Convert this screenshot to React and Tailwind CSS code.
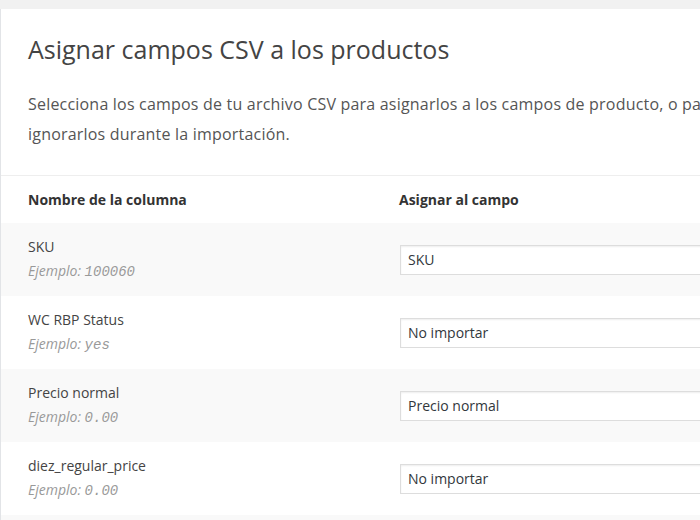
const rows = [
  { name: "SKU", example: "100060", field: "SKU" },
  { name: "WC RBP Status", example: "yes", field: "No importar" },
  { name: "Precio normal", example: "0.00", field: "Precio normal" },
  { name: "diez_regular_price", example: "0.00", field: "No importar" },
];

function App() {
  return (
    <div
      className="h-[520px] overflow-hidden bg-[#f1f1f1] pt-[9px]"
      style={{ fontFamily: '"Open Sans", "Noto Sans", sans-serif' }}
    >
      <div className="w-[960px] min-h-full bg-white border-l border-[#e2e4e7]">
        <div className="px-[27px] pt-[23px] pb-[26px]">
          <h2 className="text-[25px] leading-[34px] text-[#444]">
            Asignar campos CSV a los productos
          </h2>
          <p className="mt-[23px] text-[16px] leading-[30px] text-[#555] w-[690px] tracking-[0.2px]">
            Selecciona los campos de tu archivo CSV para asignarlos a los campos de producto, o para
            ignorarlos durante la importación.
          </p>
        </div>

        <div className="border-t border-[#eeeeee]">
          <div className="grid grid-cols-[398px_1fr] h-[47px] items-center text-[14px] font-bold text-[#333]">
            <div className="pl-[27px]">Nombre de la columna</div>
            <div>Asignar al campo</div>
          </div>

          {rows.map((row, i) => (
            <div
              key={row.name + i}
              className={
                "grid grid-cols-[398px_1fr] h-[73px] items-center " +
                (i % 2 === 0 ? "bg-[#f9f9f9]" : "bg-white")
              }
            >
              <div className="pl-[27px] text-[14px] leading-[24px]">
                <div className="text-[#444]">{row.name}</div>
                <div className="italic text-[#999]">
                  Ejemplo:{" "}
                  <span
                    className="text-[14px]"
                    style={{ fontFamily: '"Liberation Mono", "DejaVu Sans Mono", monospace' }}
                  >
                    {row.example}
                  </span>
                </div>
              </div>
              <div className="pl-[1px]">
                <div className="w-[420px] h-[30px] flex items-center px-[7px] bg-white border border-[#dddddd] shadow-[inset_0_1px_2px_rgba(0,0,0,0.07)] text-[14px] text-[#32373c]">
                  {row.field}
                </div>
              </div>
            </div>
          ))}
          <div className="h-[73px] bg-[#f9f9f9]" />
        </div>
      </div>
    </div>
  );
}

export default App;
